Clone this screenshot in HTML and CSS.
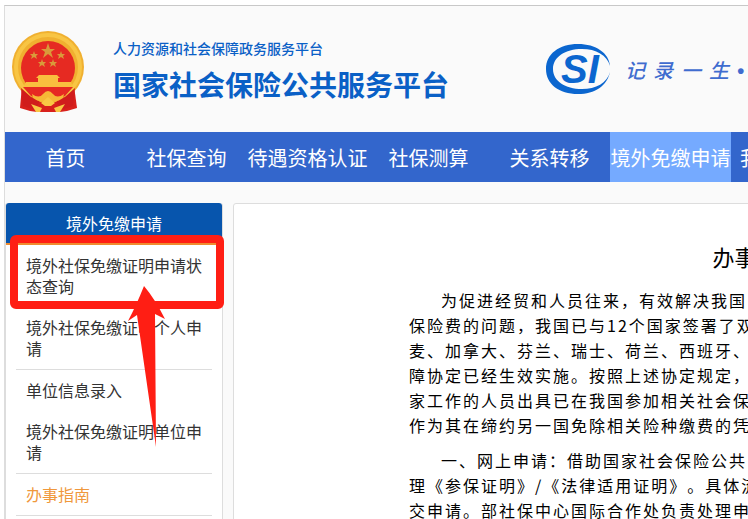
FILE: index.html
```
<!DOCTYPE html>
<html lang="zh-CN">
<head>
    <meta charset="UTF-8">
    <meta name="viewport" content="width=device-width, initial-scale=1.0">
    <title>国家社会保险公共服务平台</title>
    <link rel="stylesheet" href="styles.css">
</head>
<body>
    <div class="page">
        <!-- Header -->
        <header class="header">
            <svg class="emblem" width="74" height="82" viewBox="0 0 74 82">
                <path d="M11 55 L9 77 L19 80 L26 81 H49 L56 80 L66 77 L63 55 Z" fill="#d8201c"/>
                <circle cx="37" cy="36" r="36" fill="#f0b030"/>
                <circle cx="37" cy="36" r="32" fill="none" stroke="#f8c544" stroke-width="4"/>
                <circle cx="37" cy="37" r="27" fill="#e62a22"/>
                <path d="M37 12 L39 18 L44 18 L40 21 L42 27 L37 23 L32 27 L34 21 L30 18 L35 18 Z" fill="#d99a3a"/>
                <g fill="#d99a3a">
                    <path id="star" d="M23 20 L24 23 L27 23 L25 25 L26 28 L23 26 L20 28 L21 25 L19 23 L22 23 Z"/>
                    <use href="#star" x="27"/>
                    <use href="#star" x="8" y="8"/>
                    <use href="#star" x="19" y="8"/>
                </g>
                <path d="M28 44 H46 L49 47 H47 V51 H60 L62 56 H12 L15 51 H27 V47 H25 Z" fill="#f9bf3e"/>
                <path d="M12 56 H62 L54 65 L45 69 Q37 60 29 69 L20 65 Z" fill="#e62a22"/>
                <path d="M10 57 L20 66 L29 69 L25 79 L12 75 Z M64 57 L54 66 L45 69 L49 79 L62 75 Z" fill="#d01c1c"/>
                <path d="M21 63 Q28 68 32 63 Q37 57 42 63 Q46 68 53 63 L52 67 Q44 73 37 69 Q30 73 22 67 Z" fill="#f6b936"/>
                <path d="M30 72 L37 66 L44 72 L40 75 H34 Z M20 73 L31 77 L29 81 L25 81 Z M54 73 L43 77 L45 81 L49 81 Z" fill="#f9c744"/>
            </svg>
            <div class="brand">
                <p>人力资源和社会保障政务服务平台</p>
                <h1>国家社会保险公共服务平台</h1>
            </div>
            <svg class="si-logo" width="64" height="50" viewBox="0 0 64 50">
                <path fill="#0b66cf" fill-rule="evenodd" d="M32 0 C50 0 63 9 64 22 C61 11 50 5 36 5 C19 5 7 13 7 25 C7 37 19 45 36 45 C50 45 61 39 64 28 C61 42 49 50 32 50 C13 50 0 40 0 25 C0 10 13 0 32 0 Z"/>
                <text x="15" y="39" class="si-text">SI</text>
            </svg>
            <span class="slogan">记录一生<b>•</b></span>
        </header>

        <!-- Main navigation -->
        <nav class="nav">
            <a href="#">首页</a>
            <a href="#">社保查询</a>
            <a href="#">待遇资格认证</a>
            <a href="#">社保测算</a>
            <a href="#">关系转移</a>
            <a href="#" class="active">境外免缴申请</a>
            <a href="#" class="more">我</a>
        </nav>

        <div class="container">
            <!-- Sidebar -->
            <aside class="sidebar">
                <h2>境外免缴申请</h2>
                <ul>
                    <li><a href="#">境外社保免缴证明申请状态查询</a></li>
                    <li class="line"><a href="#">境外社保免缴证明个人申请</a></li>
                    <li><a href="#">单位信息录入</a></li>
                    <li class="line"><a href="#">境外社保免缴证明单位申请</a></li>
                    <li class="line"><a href="#" class="current">办事指南</a></li>
                </ul>
                <!-- Highlight on the first entry -->
                <div class="mark"></div>
                <svg class="arrow" width="40" height="162" viewBox="0 0 40 162">
                    <path d="M17 0 Q28 13 38 33 L28 28 L29 161 L10 29 L1 35 Q9 20 17 0 Z" fill="#ff1e14"/>
                </svg>
            </aside>

            <!-- Guide text -->
            <main class="content">
                <h3>办事指南</h3>
                <p class="indent">
                    为促进经贸和人员往来，有效解决我国<br>
                    保险费的问题，我国已与12个国家签署了双<br>
                    麦、加拿大、芬兰、瑞士、荷兰、西班牙、<br>
                    障协定已经生效实施。按照上述协定规定，<br>
                    家工作的人员出具已在我国参加相关社会保<br>
                    作为其在缔约另一国免除相关险种缴费的凭
                </p>
                <p class="indent">
                    一、网上申请：借助国家社会保险公共<br>
                    理《参保证明》/《法律适用证明》。具体流<br>
                    交申请。部社保中心国际合作处负责处理申
                </p>
            </main>
        </div>
    </div>
</body>
</html>
```
FILE: styles.css
```
* {
    margin: 0;
    padding: 0;
    box-sizing: border-box;
}

body {
    font-family: "Noto Sans CJK SC", sans-serif;
    font-size: 16px;
    color: #333;
    background: #fff;
    overflow: hidden;
}

a {
    color: inherit;
    text-decoration: none;
}

.page {
    min-width: 1276px;
    margin-top: 5px;
    margin-left: 4px;
    background: #fafafa;
    border-top: 1px solid #c8c8c8;
    border-left: 1px solid #ddd;
}

/* Header */
.header {
    display: flex;
    align-items: center;
    height: 126px;
    padding: 0 6px;
}

.emblem {
    margin-top: 6px;
}

.brand {
    width: 336px;
    margin-top: 6px;
    margin-left: 28px;
    color: #0a60c6;
}

.brand p {
    font-size: 14px;
    font-weight: 500;
    line-height: 24px;
}

.brand h1 {
    font-size: 28px;
    font-weight: 700;
    line-height: 48px;
}

.si-logo {
    margin-left: 97px;
}

.si-text {
    font: italic bold 40px "Liberation Sans", sans-serif;
    fill: #0b66cf;
}

.slogan {
    margin-left: 15px;
    font-size: 20px;
    font-style: italic;
    font-weight: 500;
    letter-spacing: 8px;
    color: #3f6ccf;
}

.slogan b {
    font-family: "Liberation Sans", sans-serif;
}

/* Navigation */
.nav {
    display: flex;
    height: 50px;
    background: #3366cc;
}

.nav a {
    flex: 0 0 121px;
    font-size: 20px;
    line-height: 52px;
    text-align: center;
    color: #fff;
}

.nav .active {
    background: #75aaff;
}

.nav .more {
    padding-left: 9px;
    text-align: left;
}

.container {
    display: flex;
    align-items: flex-start;
    gap: 10px;
    padding-top: 21px;
}

/* Sidebar */
.sidebar {
    position: relative;
    flex: 0 0 218px;
    background: #fff;
    border: 1px solid #ddd;
    border-top: none;
    border-radius: 3px;
}

.sidebar h2 {
    height: 42px;
    font-size: 16px;
    font-weight: 400;
    line-height: 40px;
    text-align: center;
    color: #fff;
    background: #0755ad;
    border-bottom: 2px solid #f08c2e;
    border-radius: 3px 3px 0 0;
}

.sidebar ul {
    list-style: none;
    padding: 0 10px 20px;
}

.sidebar li {
    padding: 10px;
    line-height: 21px;
}

.sidebar .line {
    border-bottom: 1px solid #ddd;
}

.sidebar .current {
    color: #f0983c;
}

.mark {
    position: absolute;
    top: 32px;
    left: 4px;
    width: 214px;
    height: 74px;
    border: 8px solid #ff1e14;
    border-radius: 6px;
}

.arrow {
    position: absolute;
    top: 83px;
    left: 121px;
}

/* Content panel */
.content {
    flex: 1;
    padding: 30px 175px;
    background: #fff;
    border: 1px solid #ddd;
    border-radius: 3px;
    color: #000;
}

.content h3 {
    margin-bottom: 10px;
    font-size: 22px;
    font-weight: 400;
    line-height: 44px;
    text-align: center;
}

.content p {
    margin-bottom: 10px;
    line-height: 25px;
    letter-spacing: 2px;
    white-space: nowrap;
    text-spacing-trim: space-all;
}

.indent {
    text-indent: 32px;
}
```
